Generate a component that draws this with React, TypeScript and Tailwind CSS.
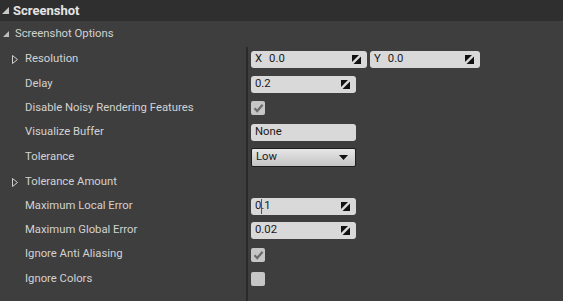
import type { ReactNode } from "react";

type RowProps = {
  label: string;
  expandable?: boolean;
  height: number;
  children?: ReactNode;
};

function Expander() {
  return (
    <svg width="6" height="9" viewBox="0 0 6 9" className="shrink-0">
      <path d="M0.5 0.5 L5.5 4.5 L0.5 8.5 Z" fill="none" stroke="#cfcfcf" strokeWidth="1" />
    </svg>
  );
}

function SpinIcon() {
  return (
    <svg width="9" height="9" viewBox="0 0 9 9" className="shrink-0">
      <path d="M0 0 L7 0 L0 7 Z" fill="#111" />
      <path d="M9 1.5 L9 9 L1.5 9 Z" fill="#111" />
    </svg>
  );
}

function NumberBox({ prefix, value, width, caret }: { prefix?: string; value: string; width: string; caret?: boolean }) {
  return (
    <div
      className={[
        "relative flex h-[17px] items-center rounded-[3px] bg-[#d9d9d9] pl-[4px] pr-[6px] text-[11.3px] text-[#1a1a1a]",
        width,
      ].join(" ")}
    >
      {prefix ? <span className="mr-[7px]">{prefix}</span> : null}
      <span className="flex-1">{value}</span>
      {caret ? <span className="absolute left-[10px] top-[1px] h-[15px] w-px bg-[#555]" /> : null}
      <SpinIcon />
    </div>
  );
}

function CheckBox({ checked }: { checked?: boolean }) {
  return (
    <div className="flex h-[14px] w-[14px] items-center justify-center rounded-[2px] bg-[#c6c6c6]">
      {checked ? (
        <svg width="11" height="10" viewBox="0 0 11 10">
          <path d="M1.5 5.2 L4.2 8 L9.6 1.8" fill="none" stroke="#6b6b6b" strokeWidth="2.2" />
        </svg>
      ) : null}
    </div>
  );
}

function Row({ label, expandable, height, children }: RowProps) {
  return (
    <div className="flex" style={{ height }}>
      <div className="flex w-[246px] items-center">
        <div className="flex w-[25px] justify-end pr-[7px]">{expandable ? <Expander /> : null}</div>
        <span className="text-[11.3px] text-[#d2d2d2]">{label}</span>
      </div>
      <div className="flex flex-1 items-center border-l-2 border-[#2a2a2a] pl-[3px]">{children}</div>
    </div>
  );
}

export default function App() {
  return (
    <div className="flex h-[301px] w-[563px] flex-col overflow-hidden bg-[#3e3e3e] font-['Roboto',sans-serif]">
      <div className="flex h-[21px] shrink-0 items-center bg-[#2f2f2f] pl-[2px]">
        <svg width="7" height="7" viewBox="0 0 7 7" className="mr-[4px] mt-[-1px]">
          <path d="M7 0 L7 7 L0 7 Z" fill="#c8c8c8" />
        </svg>
        <span className="text-[13px] font-bold text-[#e4e4e4]">Screenshot</span>
      </div>

      <div className="flex h-[26px] shrink-0 items-center pl-[3px]">
        <svg width="6" height="6" viewBox="0 0 6 6" className="mr-[6px]">
          <path d="M6 0 L6 6 L0 6 Z" fill="#bdbdbd" />
        </svg>
        <span className="text-[11.3px] text-[#d2d2d2]">Screenshot Options</span>
      </div>

      <Row label="Resolution" expandable height={25}>
        <div className="flex gap-[3px]">
          <NumberBox prefix="X" value="0.0" width="w-[116px]" />
          <NumberBox prefix="Y" value="0.0" width="w-[110px]" />
        </div>
      </Row>
      <Row label="Delay" height={24}>
        <NumberBox value="0.2" width="w-[105px]" />
      </Row>
      <Row label="Disable Noisy Rendering Features" height={24}>
        <CheckBox checked />
      </Row>
      <Row label="Visualize Buffer" height={25}>
        <div className="flex h-[17px] w-[105px] items-center rounded-[3px] bg-[#d9d9d9] pl-[4px] text-[11.3px] text-[#1a1a1a]">
          None
        </div>
      </Row>
      <Row label="Tolerance" height={25}>
        <div className="flex h-[19px] w-[105px] items-center rounded-[2px] border border-[#1e1e1e] bg-gradient-to-b from-[#e6e6e6] to-[#c4c4c4] pl-[4px] pr-[7px] text-[11.3px] text-[#1a1a1a]">
          <span className="flex-1">Low</span>
          <svg width="9" height="5" viewBox="0 0 9 5">
            <path d="M0 0 L9 0 L4.5 5 Z" fill="#111" />
          </svg>
        </div>
      </Row>
      <Row label="Tolerance Amount" expandable height={24} />
      <Row label="Maximum Local Error" height={24}>
        <NumberBox value="0.1" width="w-[105px]" caret />
      </Row>
      <Row label="Maximum Global Error" height={24}>
        <NumberBox value="0.02" width="w-[105px]" />
      </Row>
      <Row label="Ignore Anti Aliasing" height={25}>
        <CheckBox checked />
      </Row>
      <Row label="Ignore Colors" height={24}>
        <CheckBox />
      </Row>
      <div className="flex flex-1">
        <div className="w-[246px]" />
        <div className="flex-1 border-l-2 border-[#2a2a2a]" />
      </div>
    </div>
  );
}
